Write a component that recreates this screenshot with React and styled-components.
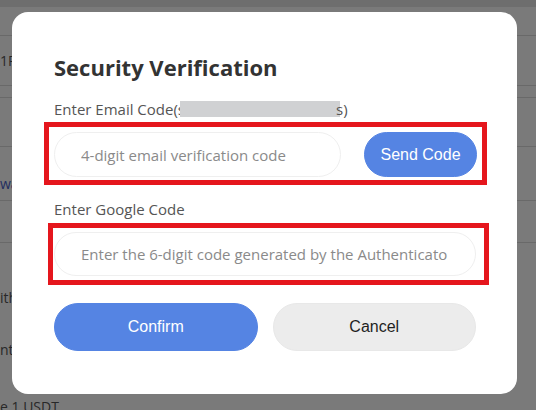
import * as React from "react";
import styled, { createGlobalStyle } from "styled-components";

const GlobalStyle = createGlobalStyle`
  html, body {
    margin: 0;
    padding: 0;
    background: #ffffff;
  }
  body {
    font-family: "Open Sans", "Liberation Sans", sans-serif;
    overflow: hidden;
  }
`;

const Page = styled.div`
  position: relative;
  width: 536px;
  height: 410px;
  overflow: hidden;
  background: #ffffff;
`;

const TopStrip = styled.div`
  height: 7px;
  background: #e6e6e6;
`;

const Row = styled.div`
  box-sizing: border-box;
  height: ${({ h }) => h}px;
  padding-top: ${({ pt }) => pt || 0}px;
  border-bottom: ${({ line }) => (line ? "1px solid #dcdcdc" : "none")};
  font-family: "Open Sans", sans-serif;
  font-size: 14px;
  line-height: 16px;
  color: ${({ blue }) => (blue ? "#4a61c9" : "#555555")};
  white-space: nowrap;
`;

const Overlay = styled.div`
  position: absolute;
  inset: 0;
  background: rgba(0, 0, 0, 0.52);
`;

const Modal = styled.div`
  position: absolute;
  left: 12px;
  top: 12px;
  width: 505px;
  box-sizing: border-box;
  padding: 40px 41px 43px 42px;
  background: #ffffff;
  border-radius: 16px;
`;

const Title = styled.h2`
  margin: 0;
  font-family: "Open Sans", sans-serif;
  font-weight: 700;
  font-size: 22px;
  line-height: 30px;
  color: #333333;
`;

const Label = styled.div`
  margin-top: ${({ top }) => top}px;
  font-family: "Open Sans", sans-serif;
  font-size: 15px;
  line-height: 20px;
  color: #555555;
  white-space: nowrap;
`;

const Masked = styled.span`
  display: inline-block;
  width: 160px;
  height: 16px;
  vertical-align: -2px;
  margin-left: -5px;
  margin-right: -4px;
  background: #d0d1d3;
`;

const Highlight = styled.div`
  margin: ${({ m }) => m};
  padding: ${({ p }) => p};
  border: 5px solid #e5161d;
  display: flex;
  align-items: center;
  gap: 23px;
`;

const Input = styled.input`
  box-sizing: border-box;
  flex: ${({ grow }) => (grow ? "1" : "none")};
  width: ${({ w }) => (w ? `${w}px` : "auto")};
  min-width: 0;
  height: ${({ h }) => h}px;
  padding: 0 27px 0 26px;
  border: 1px solid #efefef;
  border-radius: 23px;
  background: #ffffff;
  outline: none;
  font-family: "Open Sans", sans-serif;
  font-size: 15px;
  color: #333333;

  &::placeholder {
    color: #8a8a8a;
  }
`;

const Button = styled.button`
  box-sizing: border-box;
  flex: ${({ grow }) => (grow ? "1" : "none")};
  width: ${({ w }) => (w ? `${w}px` : "auto")};
  height: ${({ h }) => h}px;
  border: 1px solid ${({ secondary }) => (secondary ? "#e8e8e8" : "#5584e3")};
  border-radius: 24px;
  background: ${({ secondary }) => (secondary ? "#ececec" : "#5584e3")};
  color: ${({ secondary }) => (secondary ? "#1f1f1f" : "#ffffff")};
  font-family: "Liberation Sans", Arial, sans-serif;
  font-size: 16px;
  padding: 0;
  cursor: pointer;
`;

const Actions = styled.div`
  margin-top: 18px;
  display: flex;
  gap: 15px;
`;

const App = () => {
  return (
    <>
      <GlobalStyle />
      <Page>
        <TopStrip />
        <Row h={29} line />
        <Row h={50} pt={17} line>1R</Row>
        <Row h={12} line />
        <Row h={49} line />
        <Row h={54} pt={29} line blue>wa</Row>
        <Row h={42} line />
        <Row h={60} pt={47}>ith</Row>
        <Row h={52} pt={39}>nt</Row>
        <Row h={56} pt={44}>e 1 USDT</Row>
        <Overlay />
        <Modal>
          <Title>Security Verification</Title>
          <Label top={17}>
            Enter Email Code(s<Masked />s)
          </Label>
          <Highlight m="3px -11px 0 -10px" p="5px 5px 3px 5px">
            <Input w={287} h={45} placeholder="4-digit email verification code" />
            <Button w={113} h={45}>Send Code</Button>
          </Highlight>
          <Label top={14}>Enter Google Code</Label>
          <Highlight m="4px -13px 0 -6px" p="4px 8px 4px 1px">
            <Input
              grow
              h={44}
              placeholder="Enter the 6-digit code generated by the Authenticator App"
            />
          </Highlight>
          <Actions>
            <Button grow h={48}>Confirm</Button>
            <Button grow h={48} secondary>Cancel</Button>
          </Actions>
        </Modal>
      </Page>
    </>
  );
};

export default App;
